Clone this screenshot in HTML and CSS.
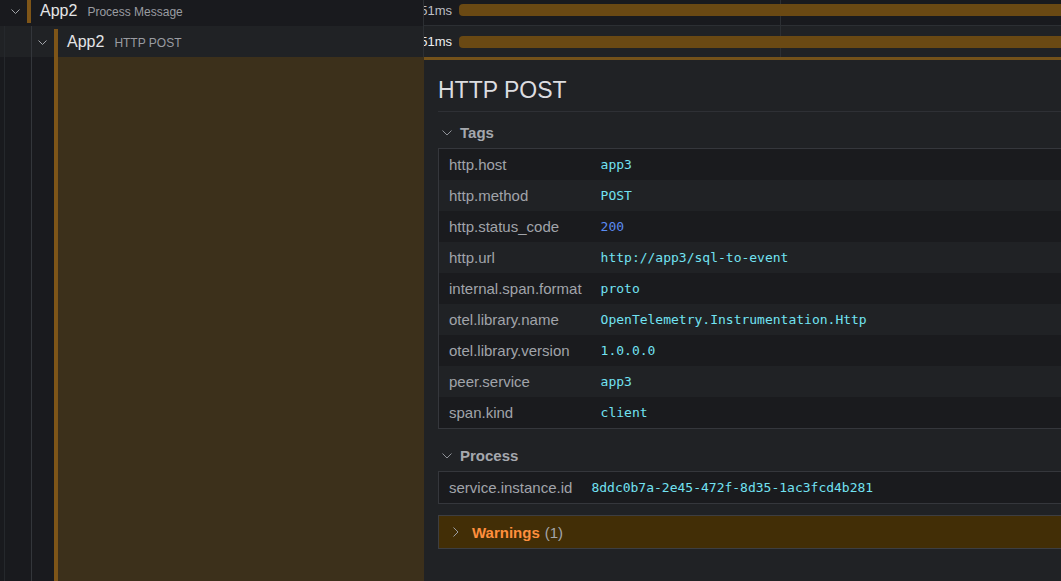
FILE: index.html
```html
<!DOCTYPE html>
<html lang="en">
<head>
<meta charset="utf-8">
<title>Trace detail</title>
<link rel="stylesheet" href="styles.css">
</head>
<body>
<div class="trace">
  <div class="span-row row-parent">
    <div class="name-col">
      <div class="toggle">
        <svg class="chev" width="9" height="5" viewBox="0 0 9 5"><polyline points="0.5,0.5 4.5,4.5 8.5,0.5" fill="none" stroke="#a3a6ab" stroke-width="1"/></svg>
      </div>
      <div class="accent"></div>
      <div class="span-name"><span class="svc">App2</span><span class="op">Process Message</span></div>
    </div>
    <div class="timeline-col">
      <div class="tick"></div>
      <div class="dur">151ms</div>
      <div class="bar"></div>
    </div>
  </div>

  <div class="span-row row-child">
    <div class="name-col">
      <div class="guide"></div>
      <div class="toggle toggle-lined">
        <svg class="chev" width="9" height="5" viewBox="0 0 9 5"><polyline points="0.5,0.5 4.5,4.5 8.5,0.5" fill="none" stroke="#a3a6ab" stroke-width="1"/></svg>
      </div>
      <div class="accent accent-open"></div>
      <div class="span-name"><span class="svc">App2</span><span class="op">HTTP POST</span></div>
    </div>
    <div class="timeline-col">
      <div class="tick"></div>
      <div class="dur dur-active">151ms</div>
      <div class="bar"></div>
    </div>
  </div>

  <div class="detail-row">
    <div class="detail-name">
      <div class="guide"></div>
      <div class="guide guide-bright"></div>
      <div class="accent-full"></div>
      <div class="expanded-fill"></div>
    </div>
    <div class="detail-info">
      <h2 class="detail-title">HTTP POST</h2>

      <section class="kv-section">
        <div class="kv-header">
          <svg width="10" height="6" viewBox="0 0 10 6"><polyline points="0.5,0.5 5,5 9.5,0.5" fill="none" stroke="#8f9298" stroke-width="1"/></svg>
          <span>Tags</span>
        </div>
        <table class="kv-table">
          <tbody>
            <tr><td class="kv-key">http.host</td><td class="kv-val">app3</td></tr>
            <tr><td class="kv-key">http.method</td><td class="kv-val">POST</td></tr>
            <tr><td class="kv-key">http.status_code</td><td class="kv-val num">200</td></tr>
            <tr><td class="kv-key">http.url</td><td class="kv-val">http://app3/sql-to-event</td></tr>
            <tr><td class="kv-key">internal.span.format</td><td class="kv-val">proto</td></tr>
            <tr><td class="kv-key">otel.library.name</td><td class="kv-val">OpenTelemetry.Instrumentation.Http</td></tr>
            <tr><td class="kv-key">otel.library.version</td><td class="kv-val">1.0.0.0</td></tr>
            <tr><td class="kv-key">peer.service</td><td class="kv-val">app3</td></tr>
            <tr><td class="kv-key">span.kind</td><td class="kv-val">client</td></tr>
          </tbody>
        </table>
      </section>

      <section class="kv-section kv-process">
        <div class="kv-header">
          <svg width="10" height="6" viewBox="0 0 10 6"><polyline points="0.5,0.5 5,5 9.5,0.5" fill="none" stroke="#8f9298" stroke-width="1"/></svg>
          <span>Process</span>
        </div>
        <table class="kv-table">
          <tbody>
            <tr><td class="kv-key">service.instance.id</td><td class="kv-val">8ddc0b7a-2e45-472f-8d35-1ac3fcd4b281</td></tr>
          </tbody>
        </table>
      </section>

      <div class="warnings">
        <svg width="6" height="10" viewBox="0 0 6 10"><polyline points="0.5,0.5 5,5 0.5,9.5" fill="none" stroke="#9a9ca1" stroke-width="1"/></svg>
        <span class="w-label">Warnings</span><span class="w-count">(1)</span>
      </div>
    </div>
  </div>
</div>
</body>
</html>
```

FILE: styles.css
```css
* { box-sizing: border-box; }

html, body {
  margin: 0;
  padding: 0;
}

body {
  width: 1061px;
  height: 581px;
  overflow: hidden;
  background: #191a1e;
  font-family: "Liberation Sans", Arial, sans-serif;
  color: #d8d9dc;
}

.trace {
  width: 1080px;
}

/* ---------- span rows ---------- */
.span-row {
  display: flex;
  height: 31px;
}

.row-parent {
  margin-top: -5px;
  background: #191a1e;
}

.row-child {
  background: #202225;
}

.name-col {
  width: 424px;
  flex: none;
  display: flex;
  align-items: stretch;
  border-right: 1px solid #2c2f33;
}

.guide {
  width: 27px;
  flex: none;
  background: linear-gradient(#25282c, #25282c) 4px 0 / 1px 100% no-repeat;
}

.guide-bright {
  background: linear-gradient(#33363b, #33363b) 4px 0 / 1px 100% no-repeat;
}

.toggle {
  width: 27px;
  flex: none;
  display: flex;
  align-items: center;
  padding-left: 11px;
}

.toggle-lined {
  background: linear-gradient(#33363b, #33363b) 4px 0 / 1px 100% no-repeat;
}

.chev {
  display: block;
  margin-top: 1px;
}

.accent {
  width: 4px;
  flex: none;
  margin: 3px 0;
  background: #7e5518;
}

.accent-open {
  margin-bottom: 0;
}

.span-name {
  align-self: center;
  display: flex;
  align-items: baseline;
  padding-left: 9px;
  white-space: nowrap;
}

.svc {
  font-size: 16px;
  color: #e4e5e7;
}

.op {
  font-size: 12px;
  color: #9a9ca2;
  margin-left: 10px;
}

/* ---------- timeline ---------- */
.timeline-col {
  flex: 1;
  position: relative;
  display: flex;
  align-items: center;
  overflow: hidden;
}

.row-parent .timeline-col {
  border-bottom: 1px solid #2c2f33;
}

.tick {
  position: absolute;
  left: 356px;
  top: 0;
  bottom: 0;
  width: 1px;
  background: #2c2f33;
}

.dur {
  width: 35px;
  flex: none;
  display: flex;
  justify-content: flex-end;
  padding-right: 7px;
  font-size: 13px;
  color: #bdbfc4;
  white-space: nowrap;
}

.dur-active {
  color: #eeeff1;
}

.bar {
  flex: 1;
  height: 12px;
  position: relative;
  background: #6a4913;
  border-radius: 4px 0 0 4px;
}

/* ---------- detail row ---------- */
.detail-row {
  display: flex;
  min-height: 540px;
}

.detail-name {
  width: 424px;
  flex: none;
  display: flex;
  align-items: stretch;
}

.accent-full {
  width: 4px;
  flex: none;
  background: #7e5518;
}

.expanded-fill {
  flex: 1;
  background: #3c301b;
}

.detail-info {
  flex: 1;
  background: #202225;
  border-top: 3px solid #74521a;
  padding: 16px 0 0 14px;
}

.detail-title {
  margin: 0;
  font-size: 23px;
  font-weight: normal;
  line-height: 28px;
  padding-bottom: 7px;
  border-bottom: 1px solid #2e3035;
  color: #dcdde0;
}

.kv-section {
  margin-top: 11px;
}

.kv-process {
  margin-top: 17px;
}

.kv-header {
  display: flex;
  align-items: center;
  height: 20px;
  line-height: 20px;
  margin-bottom: 5px;
  font-size: 15px;
  font-weight: bold;
  color: #a5a8ae;
}

.kv-header svg {
  display: block;
  margin-left: 4px;
  margin-right: 8px;
}

.kv-table {
  width: 100%;
  border: 1px solid #35373c;
  border-spacing: 0;
  border-collapse: separate;
}

.kv-table tr {
  height: 31px;
}

.kv-table tr:nth-child(odd) {
  background: #1a1b1e;
}

.kv-key {
  width: 1%;
  white-space: nowrap;
  padding: 0 10px;
  font-size: 15px;
  color: #a1a4aa;
}

.kv-val {
  padding: 0 0 0 9px;
  font-family: "DejaVu Sans Mono", "Liberation Mono", monospace;
  font-size: 13px;
  color: #72e2f2;
  white-space: nowrap;
}

.kv-val.num {
  color: #5a8cf2;
}

.warnings {
  margin-top: 11px;
  height: 34px;
  border: 1px solid #3d3e41;
  background: #422e06;
  display: flex;
  align-items: center;
  padding-left: 14px;
  font-size: 15px;
}

.warnings svg {
  display: block;
  margin-right: 13px;
}

.w-label {
  font-weight: bold;
  color: #ff8f3d;
}

.w-count {
  margin-left: 5px;
  color: #a4a6ab;
}
```
